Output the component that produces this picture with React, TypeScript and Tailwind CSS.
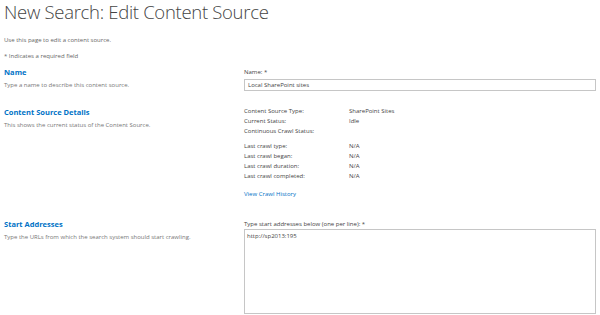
export default function App() {
  const rowsA = [
    ["Content Source Type:", "SharePoint Sites"],
    ["Current Status:", "Idle"],
    ["Continuous Crawl Status:", ""],
  ];
  const rowsB = [
    ["Last crawl type:", "N/A"],
    ["Last crawl began:", "N/A"],
    ["Last crawl duration:", "N/A"],
    ["Last crawl completed:", "N/A"],
  ];
  return (
    <div className="w-[600px] h-[315px] overflow-hidden bg-white pl-[4px] font-['Open_Sans',sans-serif] text-[#444]">
      <h1 className="text-[18.5px] font-light leading-[24px] tracking-[-0.3px] text-[#444] whitespace-nowrap">
        New Search: Edit Content Source
      </h1>
      <div className="mt-[11px] text-[6px] leading-[10px] text-[#666]">Use this page to edit a content source.</div>
      <div className="mt-[6px] text-[6px] leading-[10px] text-[#666]">* Indicates a required field</div>

      {/* Name */}
      <div className="mt-[6px] flex">
        <div className="w-[240px] shrink-0">
          <div className="text-[7.5px] font-bold leading-[10px] text-[#0072c6]">Name</div>
          <div className="mt-[3px] text-[6px] leading-[10px] text-[#777]">Type a name to describe this content source.</div>
        </div>
        <div className="flex-1 mr-[4px]">
          <div className="text-[6px] leading-[10px] text-[#444]">Name: *</div>
          <div className="mt-[2px] h-[12px] border border-[#c6c6c6] pl-[3px] text-[6px] leading-[10px] text-[#444]">
            Local SharePoint sites
          </div>
        </div>
      </div>

      {/* Content Source Details */}
      <div className="mt-[16px] flex">
        <div className="w-[240px] shrink-0">
          <div className="text-[7.5px] font-bold leading-[10px] text-[#0072c6]">Content Source Details</div>
          <div className="mt-[3px] text-[6px] leading-[10px] text-[#777]">This shows the current status of the Content Source.</div>
        </div>
        <div className="flex-1 mr-[4px] text-[6px] leading-[9.8px] text-[#444]">
          {rowsA.map(([k, v]) => (
            <div key={k} className="flex">
              <div className="w-[105px] shrink-0">{k}</div>
              <div>{v}</div>
            </div>
          ))}
          <div className="mt-[6px]">
            {rowsB.map(([k, v]) => (
              <div key={k} className="flex">
                <div className="w-[105px] shrink-0">{k}</div>
                <div>{v}</div>
              </div>
            ))}
          </div>
          <div className="mt-[8px] text-[#0072c6]">View Crawl History</div>
        </div>
      </div>

      {/* Start Addresses */}
      <div className="mt-[20px] flex">
        <div className="w-[240px] shrink-0">
          <div className="text-[7.5px] font-bold leading-[10px] text-[#0072c6]">Start Addresses</div>
          <div className="mt-[3px] text-[6px] leading-[10px] text-[#777]">Type the URLs from which the search system should start crawling.</div>
        </div>
        <div className="flex-1 mr-[4px]">
          <div className="text-[6px] leading-[10px] text-[#444]">Type start addresses below (one per line): *</div>
          <div className="h-[85px] border border-[#c6c6c6] pl-[2px] pt-[1px] text-[6px] leading-[10px] text-[#444]">
            http://sp2013:195
          </div>
        </div>
      </div>
    </div>
  );
}
